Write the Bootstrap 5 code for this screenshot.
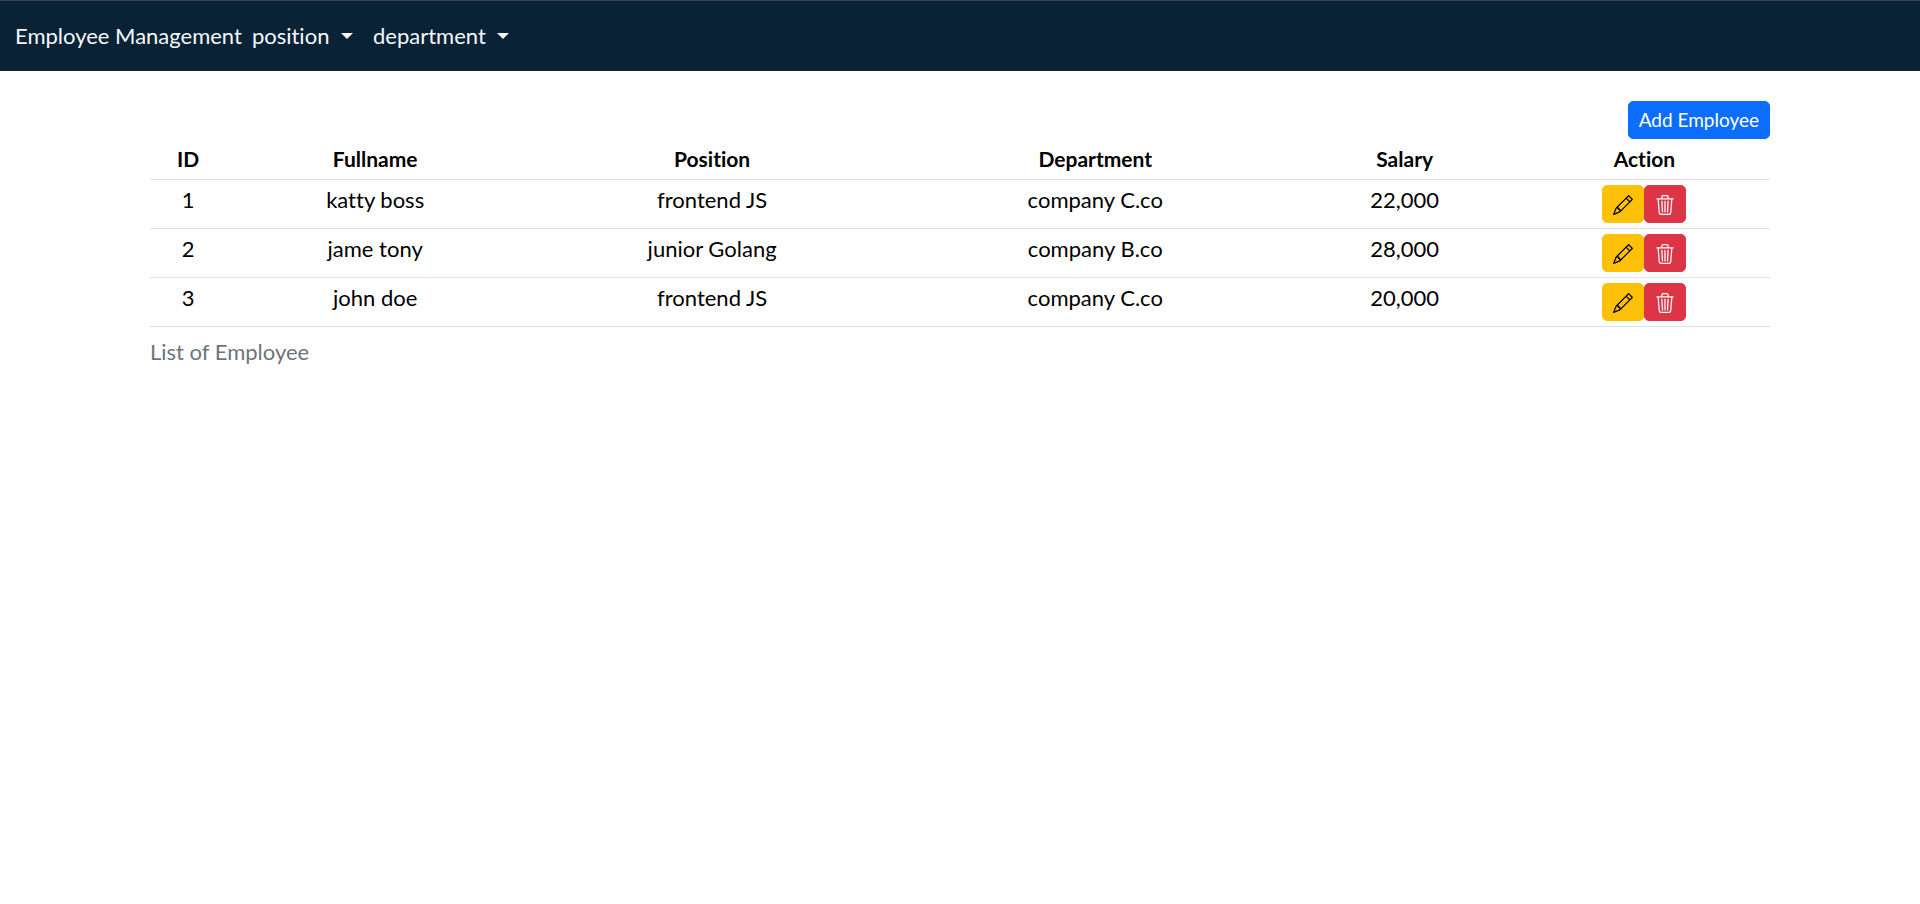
<!DOCTYPE html>
<html lang="en">
<head>
<meta charset="utf-8">
<meta name="viewport" content="width=device-width, initial-scale=1">
<title>Employee Management</title>
<link href="https://cdn.jsdelivr.net/npm/bootstrap@5.3.0/dist/css/bootstrap.min.css" rel="stylesheet">
<style>
  html { font-size: 20px; }
  body { font-family: Lato, "Open Sans", sans-serif; font-variant-ligatures: none; color: #000; }
  .topbar { background: #092235; border-top: 1px solid #3b4248; }
  .topbar .navbar-brand, .topbar .nav-link { font-size: 22px; line-height: 30px; color: #f4f8fb; }
  .topbar .dropdown-toggle { display: flex; align-items: center; gap: 6px; }
  .topbar .dropdown-toggle::after { border-top-width: 6px; border-left-width: 6px; border-right-width: 6px; }
  .page-body { max-width: 1650px; }
  .btn-sm { font-size: 19px; line-height: 26px; border-radius: 5px; }
  .staff { table-layout: fixed; line-height: 30px; font-size: 22px; --bs-table-color: #000; }
  .staff th { font-size: 21px; font-weight: 700; }
  .staff caption { font-size: 22px; color: #6c757d; }
  .staff thead { border-color: inherit; }
  .w-id { width: 4.7%; } .w-name { width: 18.4%; } .w-pos { width: 23.2%; }
  .w-dep { width: 24.1%; } .w-sal { width: 14.1%; }
  .icon-btn svg { display: block; width: 20px; height: 20px; margin: 4px 0 2px; }
</style>
</head>
<body>
<svg class="d-none" aria-hidden="true">
  <symbol id="pencil" viewBox="0 0 16 16"><path d="M12.146.146a.5.5 0 0 1 .708 0l3 3a.5.5 0 0 1 0 .708l-10 10a.5.5 0 0 1-.168.11l-5 2a.5.5 0 0 1-.65-.65l2-5a.5.5 0 0 1 .11-.168l10-10zM11.207 2.5 13.5 4.793 14.793 3.5 12.5 1.207 11.207 2.5zm1.586 3L10.5 3.207 4 9.707V10h.5a.5.5 0 0 1 .5.5v.5h.5a.5.5 0 0 1 .5.5v.5h.293l6.5-6.5zm-9.761 5.175-.106.106-1.528 3.821 3.821-1.528.106-.106A.5.5 0 0 1 5 12.5V12h-.5a.5.5 0 0 1-.5-.5V11h-.5a.5.5 0 0 1-.468-.325z"/></symbol>
  <symbol id="trash" viewBox="0 0 16 16"><path d="M6.5 1h3a.5.5 0 0 1 .5.5v1H6v-1a.5.5 0 0 1 .5-.5ZM11 2.5v-1A1.5 1.5 0 0 0 9.5 0h-3A1.5 1.5 0 0 0 5 1.500v1H2.506a.58.58 0 0 0-.01 0H1.500a.5.5 0 0 0 0 1h.538l.853 10.660A2 2 0 0 0 4.885 16h6.230a2 2 0 0 0 1.994-1.840l.853-10.660h.538a.5.5 0 0 0 0-1h-.995a.59.59 0 0 0-.010 0H11Zm1.958 1-.846 10.580a1 1 0 0 1-.997.920h-6.230a1 1 0 0 1-.997-.920L3.042 3.500h9.916Zm-7.487 1a.5.5 0 0 1 .528.470l.500 8.500a.5.5 0 0 1-.998.060L5 5.030a.5.5 0 0 1 .470-.530Zm5.058 0a.5.5 0 0 1 .470.530l-.500 8.500a.5.5 0 1 1-.998-.060l.500-8.500a.5.5 0 0 1 .528-.470ZM8 4.500a.5.5 0 0 1 .500.500v8.500a.5.5 0 0 1-1 0V5a.5.5 0 0 1 .500-.500Z"/></symbol>
</svg>

<nav class="navbar navbar-expand navbar-dark topbar">
  <div class="container-fluid">
    <a class="navbar-brand me-0 py-0" href="#">Employee Management</a>
    <ul class="navbar-nav me-auto">
      <li class="nav-item dropdown"><a class="nav-link dropdown-toggle" href="#" role="button" data-bs-toggle="dropdown" aria-expanded="false">position</a>
        <ul class="dropdown-menu"><li><a class="dropdown-item" href="#">Add position</a></li></ul></li>
      <li class="nav-item dropdown"><a class="nav-link dropdown-toggle" href="#" role="button" data-bs-toggle="dropdown" aria-expanded="false">department</a>
        <ul class="dropdown-menu"><li><a class="dropdown-item" href="#">Add department</a></li></ul></li>
    </ul>
  </div>
</nav>

<main class="container-fluid page-body mt-4">
  <div class="d-flex justify-content-end">
    <button type="button" class="btn btn-primary btn-sm">Add Employee</button>
  </div>
  <table class="table table-sm text-center staff">
    <caption>List of Employee</caption>
    <thead>
      <tr><th scope="col" class="w-id">ID</th><th scope="col" class="w-name">Fullname</th><th scope="col" class="w-pos">Position</th><th scope="col" class="w-dep">Department</th><th scope="col" class="w-sal">Salary</th><th scope="col">Action</th></tr>
    </thead>
    <tbody>
      <tr><td>1</td><td>katty boss</td><td>frontend JS</td><td>company C.co</td><td>22,000</td>
        <td><div class="d-flex justify-content-center"><button type="button" class="btn btn-warning btn-sm icon-btn" aria-label="Edit"><svg fill="currentColor"><use href="#pencil"/></svg></button><button type="button" class="btn btn-danger btn-sm icon-btn" aria-label="Delete"><svg fill="currentColor"><use href="#trash"/></svg></button></div></td></tr>
      <tr><td>2</td><td>jame tony</td><td>junior Golang</td><td>company B.co</td><td>28,000</td>
        <td><div class="d-flex justify-content-center"><button type="button" class="btn btn-warning btn-sm icon-btn" aria-label="Edit"><svg fill="currentColor"><use href="#pencil"/></svg></button><button type="button" class="btn btn-danger btn-sm icon-btn" aria-label="Delete"><svg fill="currentColor"><use href="#trash"/></svg></button></div></td></tr>
      <tr><td>3</td><td>john doe</td><td>frontend JS</td><td>company C.co</td><td>20,000</td>
        <td><div class="d-flex justify-content-center"><button type="button" class="btn btn-warning btn-sm icon-btn" aria-label="Edit"><svg fill="currentColor"><use href="#pencil"/></svg></button><button type="button" class="btn btn-danger btn-sm icon-btn" aria-label="Delete"><svg fill="currentColor"><use href="#trash"/></svg></button></div></td></tr>
    </tbody>
  </table>
</main>
<script src="https://cdn.jsdelivr.net/npm/bootstrap@5.3.0/dist/js/bootstrap.bundle.min.js"></script>
</body>
</html>
